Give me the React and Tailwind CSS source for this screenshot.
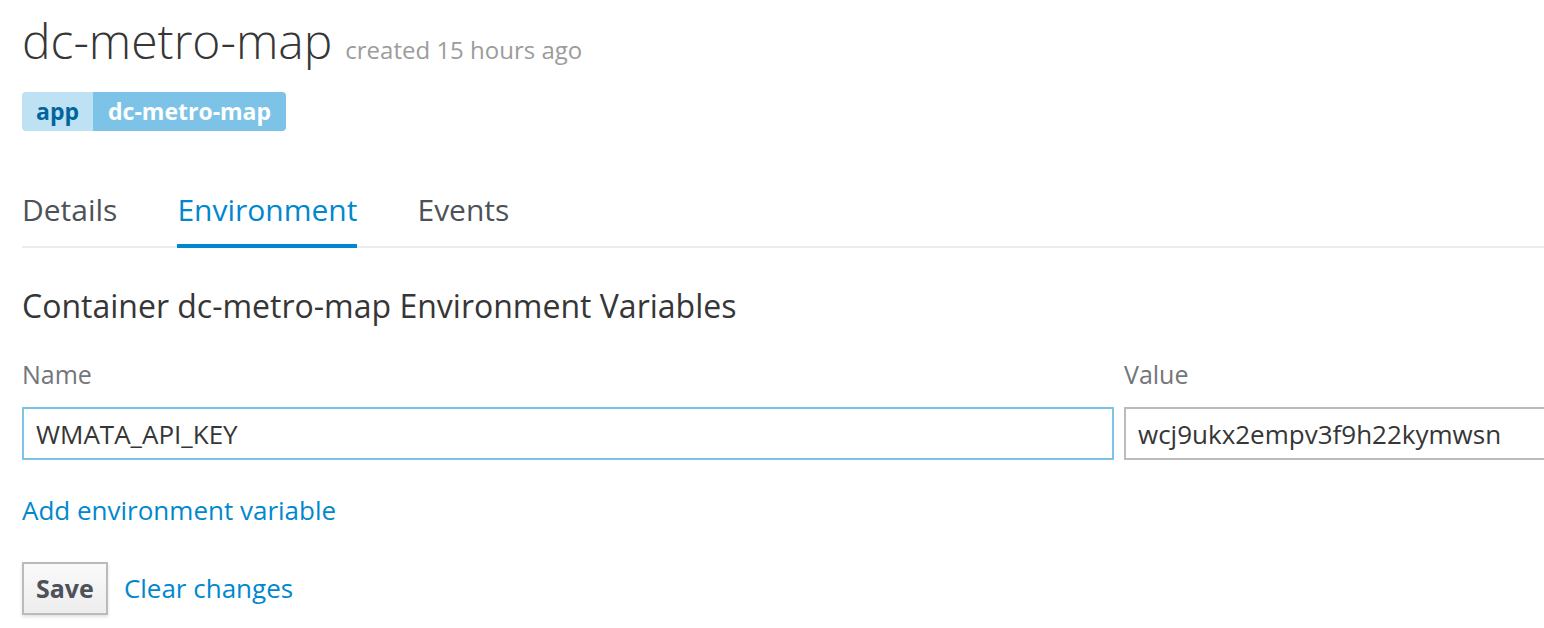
import React, { useState } from "react";

const tabs = ["Details", "Environment", "Events"];

export default function App() {
  const [activeTab, setActiveTab] = useState("Environment");
  const [name, setName] = useState("WMATA_API_KEY");
  const [value, setValue] = useState("wcj9ukx2empv3f9h22kymwsn");

  return (
    <div className="min-h-screen overflow-hidden bg-white pl-[22px] pt-[8px] font-['Open_Sans',sans-serif] text-[#363636]">
      {/* === Header === */}
      <div className="flex items-baseline">
        <h1 className="text-[48px] font-light leading-[66px] text-[#363636]">dc-metro-map</h1>
        <span className="ml-[13px] text-[24px] text-[#9c9c9c]">created 15 hours ago</span>
      </div>

      {/* === Labels === */}
      <div className="mt-[18px] inline-flex h-[39px] overflow-hidden rounded-[4px] text-[23px] font-bold leading-[39px]">
        <span className="bg-[#bee1f4] px-[14px] text-[#00659c]">app</span>
        <span className="bg-[#7dc3e8] px-[15px] text-white">dc-metro-map</span>
      </div>

      {/* === Tabs === */}
      <div className="mt-[59px] flex gap-[60px] border-b-2 border-[#ececec]">
        {tabs.map((tab) => (
          <button
            key={tab}
            onClick={() => setActiveTab(tab)}
            className={`-mb-[2px] border-b-4 pb-[14px] text-[30px] leading-[40px] ${
              activeTab === tab
                ? "border-[#0088ce] text-[#0088ce]"
                : "border-transparent text-[#4d5258]"
            }`}
          >
            {tab}
          </button>
        ))}
      </div>

      {/* === Environment form === */}
      <h2 className="mt-[38px] text-[32px] leading-[40px] text-[#363636]">
        Container dc-metro-map Environment Variables
      </h2>

      <div className="mt-[31px] flex gap-[10px]">
        <div className="flex w-[1092px] shrink-0 flex-col">
          <label className="text-[25px] leading-[34px] text-[#72767b]">Name</label>
          <input
            value={name}
            onChange={(e) => setName(e.target.value)}
            className="mt-[16px] h-[53px] w-full border-2 border-[#7dc3e8] px-[12px] text-[26px] text-[#363636] outline-none"
          />
        </div>
        <div className="flex w-[480px] shrink-0 flex-col">
          <label className="text-[25px] leading-[34px] text-[#72767b]">Value</label>
          <input
            value={value}
            onChange={(e) => setValue(e.target.value)}
            className="mt-[16px] h-[53px] w-full border-2 border-[#bbbbbb] px-[12px] text-[26px] text-[#363636] outline-none"
          />
        </div>
      </div>

      <a href="#" className="mt-[33px] block text-[26px] leading-[34px] text-[#0088ce]">
        Add environment variable
      </a>

      <div className="mt-[35px] flex items-center gap-[16px]">
        <button className="h-[53px] border-2 border-[#bbbbbb] bg-gradient-to-b from-[#fafafa] to-[#ededed] px-[12px] text-[25px] font-bold text-[#4d5258] shadow-[0_2px_3px_rgba(0,0,0,0.12)]">
          Save
        </button>
        <a href="#" className="text-[26px] text-[#0088ce]">
          Clear changes
        </a>
      </div>
    </div>
  );
}
